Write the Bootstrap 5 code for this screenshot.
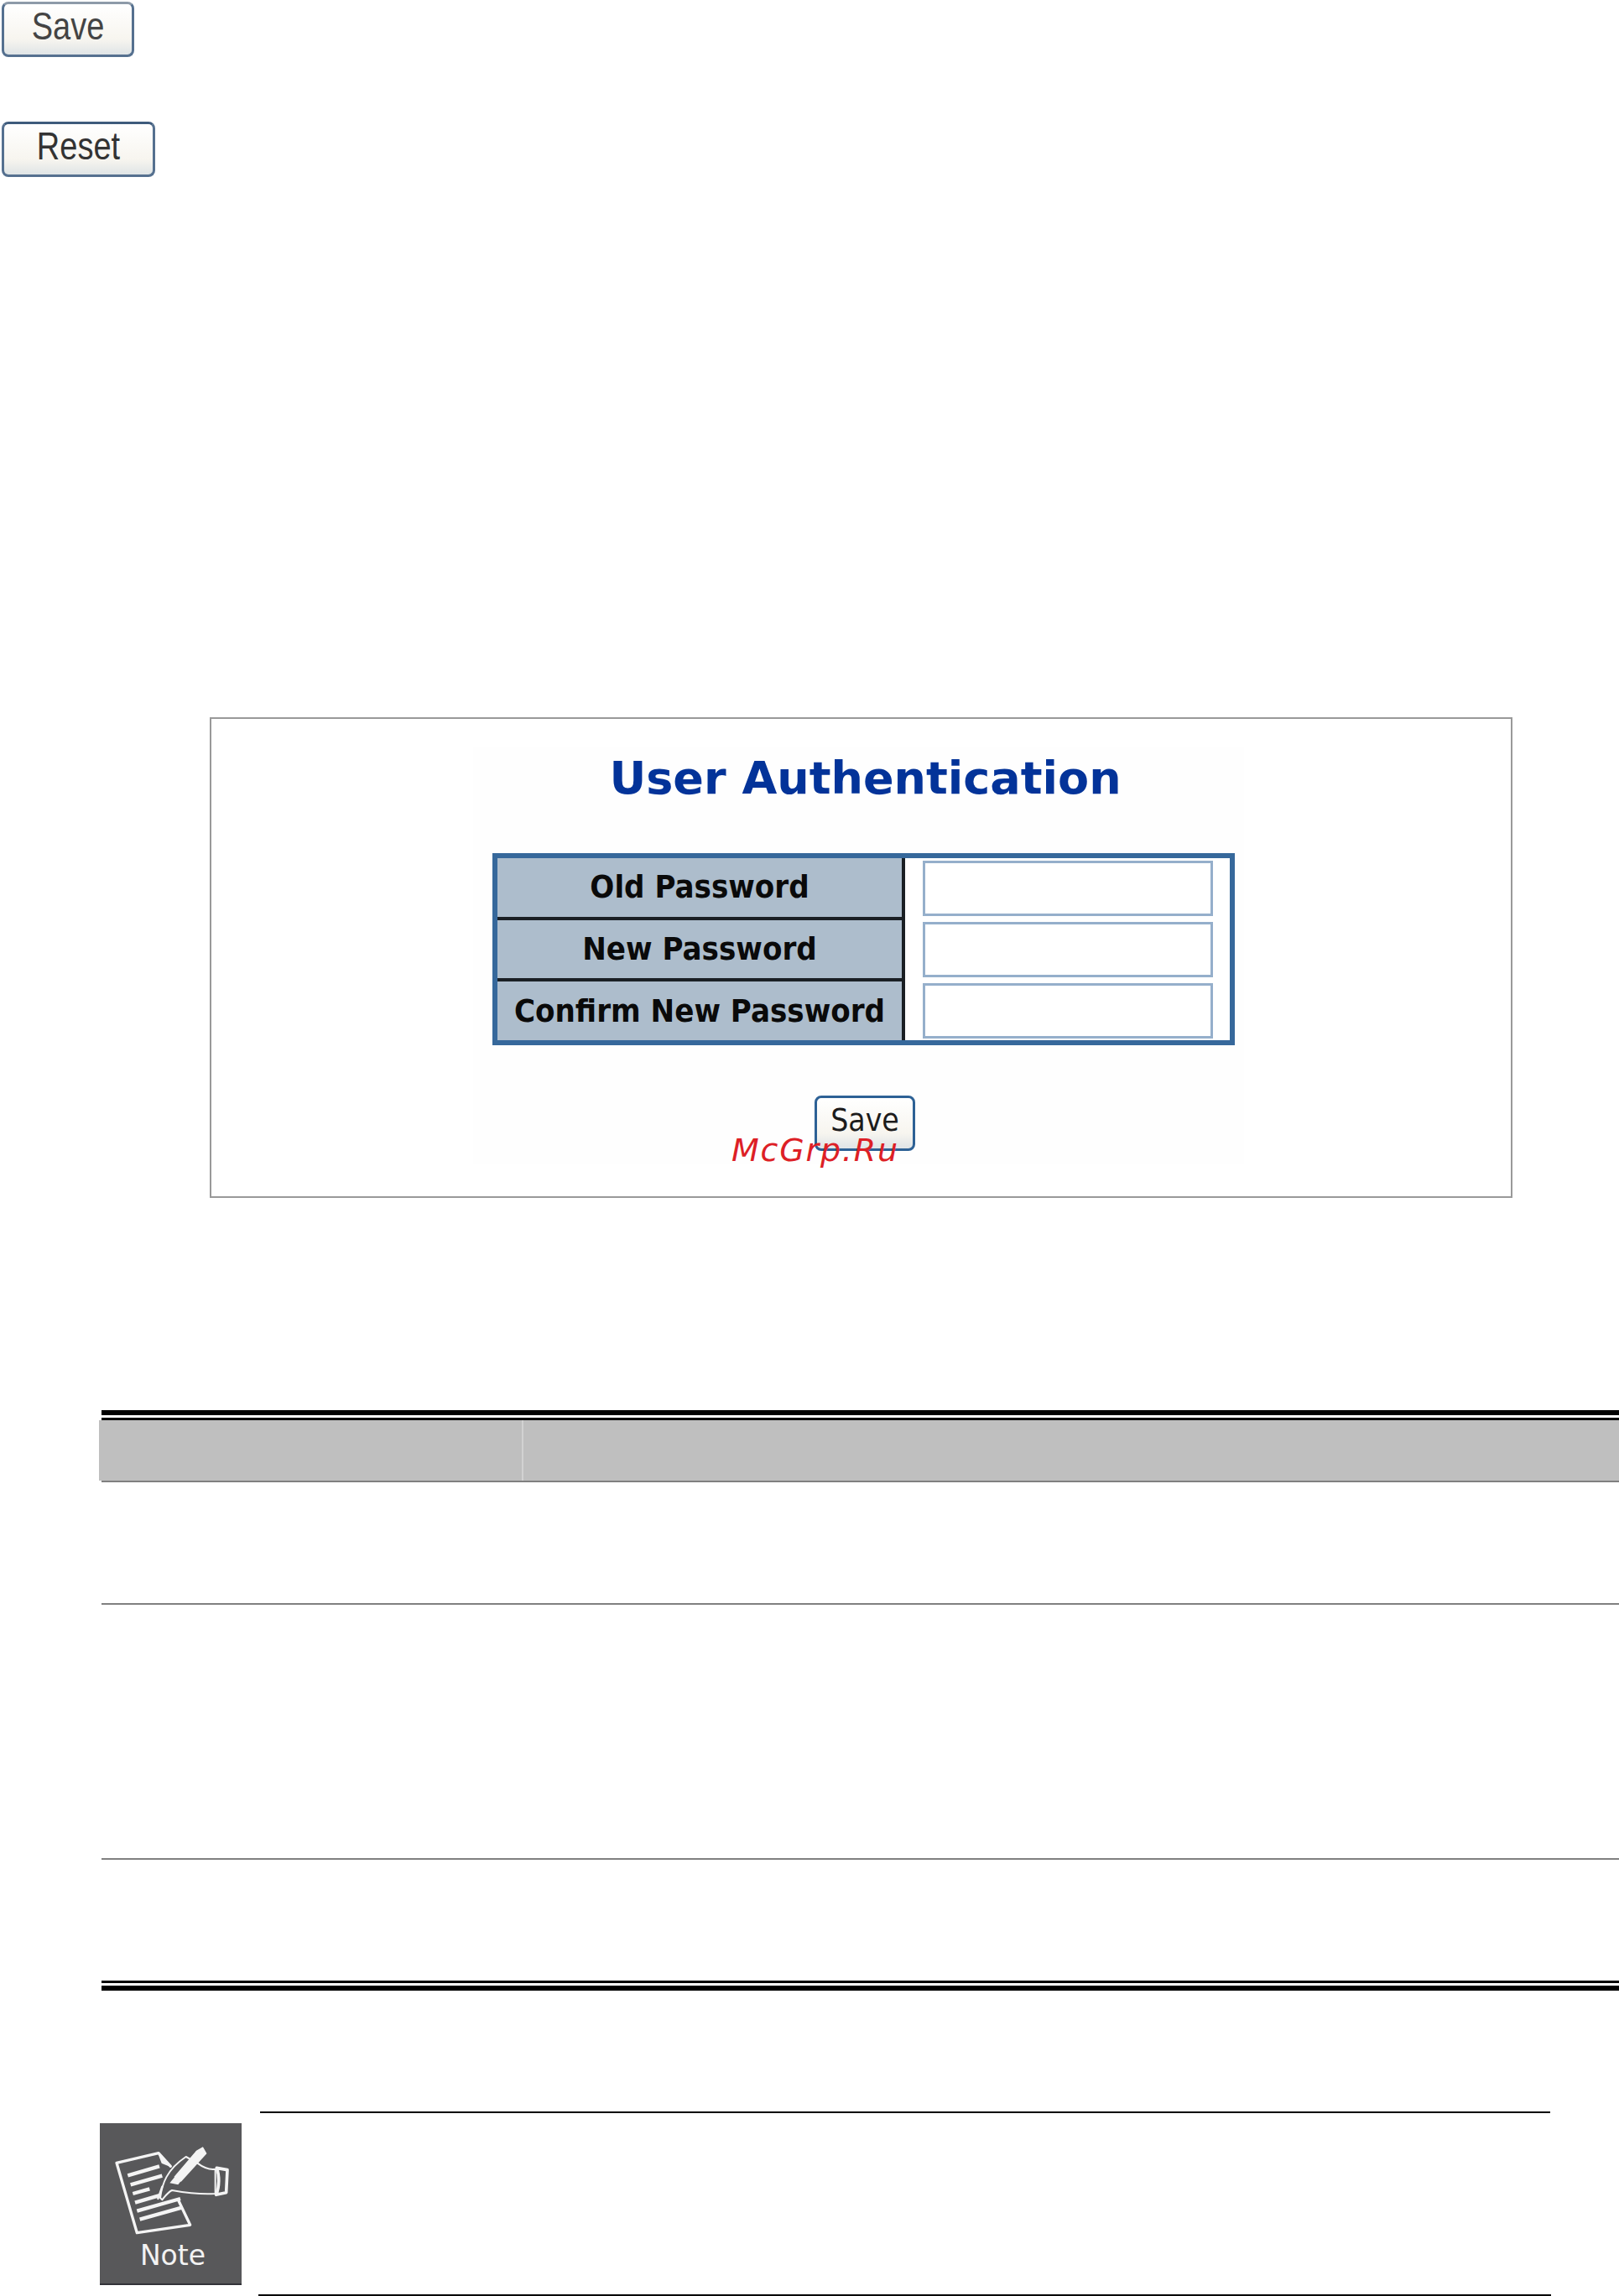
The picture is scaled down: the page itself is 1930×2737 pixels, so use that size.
<!DOCTYPE html>
<html lang="en">
<head>
<meta charset="utf-8">
<title>User Authentication</title>
<link href="https://cdn.jsdelivr.net/npm/bootstrap@5.3.0/dist/css/bootstrap.min.css" rel="stylesheet">
<style>
html,body{margin:0;padding:0;background:#fff;overflow:hidden}
body{width:1930px;height:2737px;font-family:"Liberation Sans",Arial,sans-serif;color:#000}
.page-wrap{width:1930px;height:2737px}
.shot-btn{display:block;height:66px;padding:0 0 8px;border:3px solid #55708f;border-top-color:#8d9aa8;border-radius:8px;background:linear-gradient(#ffffff,#f7f5ef 70%,#dfe4e6);color:#444;font-family:"Liberation Sans",sans-serif;font-size:38px;line-height:48px;text-align:center}
.tall-text{display:inline-block;transform:scaleY(1.2)}
.btn-save-top{width:158px;margin:2px 0 0 2px}
.btn-reset-top{width:183px;margin:77px 0 0 2px;border-top-color:#3e5b7c;color:#333}
.figure-box{width:1553px;height:573px;margin:644px 0 0 250px;border:2px solid #999;padding:34px 0 0 312px}
.figure-inner{width:919px;height:497px;background:#fefefe;position:relative}
.figure-title{height:126px;margin:0;padding:0 0 0 16px;text-align:center;font-family:"DejaVu Sans",sans-serif;font-weight:700;font-size:54px;line-height:74px;color:#033399}
.auth-table{width:885px;margin-left:23px;height:229px;border:6px solid #36689b;display:flex;background:#fff}
.auth-labels{width:486px;background:#adbdcc;border-right:4px solid #1a1f24;display:flex;flex-direction:column}
.auth-label{flex:1 1 0;display:flex;align-items:center;justify-content:center;font-family:"DejaVu Sans Condensed","DejaVu Sans",sans-serif;font-weight:700;font-size:38px;color:#0a0a0a;border-bottom:4px solid #1a1f24}
.auth-label:last-child{border-bottom:0}
.auth-inputs{flex:1 1 0;padding:3px 0 0 21px;display:flex;flex-direction:column;gap:7px}
.auth-input{width:346px;height:66px;border:3px solid #95afcb;background:#fff;padding:0;border-radius:0}
.btn-save-fig{width:120px;height:66px;margin:60px 0 0 407px;border:3px solid #2d6195;padding-bottom:6px;line-height:50px;font-size:37px;color:#1c1c1c;font-family:"DejaVu Sans Condensed","DejaVu Sans",sans-serif}
.watermark{position:absolute;left:308px;top:456px;font-family:"DejaVu Sans",sans-serif;font-style:italic;font-size:38px;line-height:48px;letter-spacing:1.8px;color:#dd1f26;white-space:nowrap}
.param-wrap{margin-top:253px}
.rule-top{margin-left:121px;height:12px;border-top:6px solid #000;border-bottom:3px solid #000}
.param-head{display:flex;height:72px;margin-left:118px;background:#bfbfbf}
.param-head-a{width:506px;border-right:2px solid #d2d2d2}
.rule-head{margin-left:121px;height:2px;background:#808080}
.param-row{margin-left:121px;border-bottom:2px solid #808080}
.row-a{height:146px}
.row-b{height:304px}
.row-c{height:144px;border-bottom:0}
.rule-bottom{margin-left:121px;height:12px;border-top:3px solid #000;border-bottom:6px solid #000}
.note-area{display:flex;margin-top:144px;margin-left:119px}
.note-icon{width:169px;height:193px;margin-top:14px;background:#58585a;border-bottom:2px solid #333338;display:flex;flex-direction:column;align-items:center}
.note-svg{display:block;width:169px;height:140px}
.note-word{font-family:"DejaVu Sans",sans-serif;font-size:33px;line-height:40px;color:#f2f2f2;margin:-2px 0 0 5px}
.note-body{margin-left:20px;width:1541px;height:220px;display:flex;flex-direction:column;justify-content:space-between}
.note-rule-a{height:2px;background:#000;margin-left:2px;margin-right:1px}
.note-rule-b{height:2px;background:#000}
</style>
</head>
<body>
<div class="page-wrap">
  <button type="button" class="shot-btn btn-save-top"><span class="tall-text">Save</span></button>
  <button type="button" class="shot-btn btn-reset-top"><span class="tall-text">Reset</span></button>

  <div class="figure-box">
    <div class="figure-inner">
      <h1 class="figure-title">User Authentication</h1>
      <div class="auth-table">
        <div class="auth-labels">
          <div class="auth-label">Old Password</div>
          <div class="auth-label">New Password</div>
          <div class="auth-label">Confirm New Password</div>
        </div>
        <div class="auth-inputs">
          <input class="auth-input" type="password" aria-label="Old Password">
          <input class="auth-input" type="password" aria-label="New Password">
          <input class="auth-input" type="password" aria-label="Confirm New Password">
        </div>
      </div>
      <button type="button" class="shot-btn btn-save-fig">Save</button>
      <div class="watermark">McGrp.Ru</div>
    </div>
  </div>

  <div class="param-wrap">
    <div class="rule-top"></div>
    <div class="param-head"><div class="param-head-a"></div><div class="flex-grow-1"></div></div>
    <div class="rule-head"></div>
    <div class="param-row row-a"></div>
    <div class="param-row row-b"></div>
    <div class="param-row row-c"></div>
    <div class="rule-bottom"></div>
  </div>

  <div class="note-area">
    <div class="note-icon">
      <svg class="note-svg" viewBox="0 0 507 420" fill="none" stroke="#f4f4f4" stroke-linejoin="round" stroke-linecap="round" aria-hidden="true">
        <g transform="translate(18,42)">
          <path d="M262 232 L305 322 L115 350 L42 100 L192 65 L235 112" stroke-width="10"/>
          <path d="M192 65 L205 100 L235 112 Z" fill="#f4f4f4" stroke-width="5"/>
          <g stroke-width="13" stroke-linecap="butt">
            <path d="M82 145 L195 112"/>
            <path d="M92 178 L205 146"/>
            <path d="M100 210 L160 193"/>
            <path d="M108 242 L200 215"/>
            <path d="M115 272 L270 228"/>
            <path d="M125 302 L275 260"/>
          </g>
          <path d="M198 225 C205 175 220 125 290 78 L330 100 C350 115 375 125 395 122 L395 210 C340 214 280 205 240 198 C225 205 215 220 205 232 Z" fill="#58585a" stroke-width="6"/>
          <path d="M328 58 L350 45 L362 66 L272 165 L250 150 Z" fill="#f4f4f4" stroke="#f4f4f4" stroke-width="4"/>
          <path d="M250 150 L272 165 L262 178 L232 172 Z" fill="#f4f4f4" stroke="none"/>
          <path d="M205 185 L190 228" stroke-width="7"/>
          <path d="M400 118 L438 125 L434 206 L398 214 C410 185 410 145 400 118 Z" stroke-width="11"/>
        </g>
      </svg>
      <div class="note-word">Note</div>
    </div>
    <div class="note-body"><div class="note-rule-a"></div><div class="note-rule-b"></div></div>
  </div>
</div>
<script src="https://cdn.jsdelivr.net/npm/bootstrap@5.3.0/dist/js/bootstrap.bundle.min.js"></script>
</body>
</html>
